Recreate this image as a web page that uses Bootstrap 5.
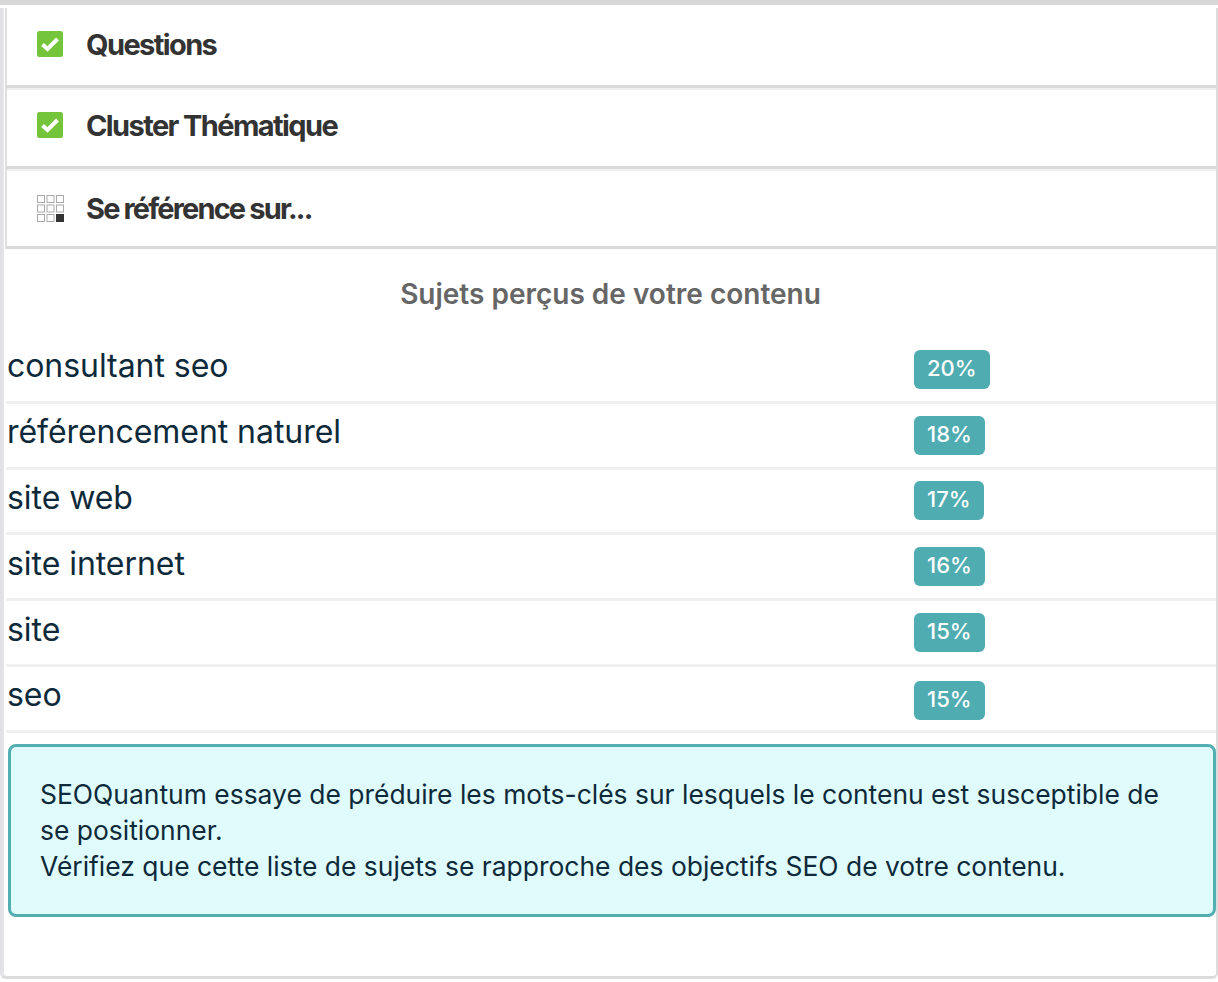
<!DOCTYPE html>
<html lang="fr">
<head>
    <meta charset="UTF-8">
    <meta name="viewport" content="width=device-width, initial-scale=1">
    <title>Sujets perçus</title>
    <link href="https://cdn.jsdelivr.net/npm/bootstrap@5.3.0/dist/css/bootstrap.min.css" rel="stylesheet">
    <style>
        html, body { height: 982px; overflow: hidden; }
        body { background: #fff; font-family: Inter, "Liberation Sans", sans-serif; color: #0e2a3a; }
        .frame { height: 971px; border-left: 2px solid #dfe1e4; border-right: 2px solid #dcdcdc; border-bottom: 3px solid #dcdcdc; border-radius: 0 0 6px 6px; background: #fff; padding-left: 4px; box-shadow: inset 2px 0 0 #e4e4e4; }
        .top-rule { height: 8px; background: #fff; border-top: 5px solid #d8d8d8; }
        .sect-row { height: 80px; gap: 23px; padding-left: 30px; padding-bottom: 4px; border-left: 2px solid #dedede; margin-left: -1px; border-bottom: 3px solid #dadada; font-weight: 700; font-size: 29px; letter-spacing: -1.6px; color: #333; }
        .sect-row + .sect-row { box-shadow: inset 0 2px 0 #f0f0f0; height: 81px; padding-bottom: 2px; }
        .sect-row + .sect-row + .sect-row { height: 80px; padding-bottom: 0; }
        .sect-row svg { flex: none; margin-bottom: 2px; }
        .sect-row .grid-icon { margin: 2px 0 0; }
        .sect-row .low-label { padding-top: 2px; margin-left: -1px; letter-spacing: -1.85px; }
        .topics-title { font-size: 28px; font-weight: 600; color: #666; text-align: center; margin: 29px 0 0; line-height: 32px; padding-right: 1px; }
        .topics { margin-top: 28px; }
        .topic-row { height: 65.8px; border-bottom: 3px solid #f0f0f0; font-size: 32px; color: #0e2a3a; padding-left: 1px; }
        .topic-name { width: 907px; flex: none; padding-bottom: 6px; letter-spacing: -.05px; }
        .pct { background: #4facb0; color: #fff; border-radius: 6px; font-size: 22px; font-weight: 500; line-height: 37px; height: 39px; padding: 0 13px; }
        .topic-row:last-child .pct { margin-top: 4px; }
        .note { margin: 11px 0 0 2px; height: 173px; border: 3px solid #53aeb1; border-radius: 8px; background: #dffbfc; padding: 29px 40px 30px 29px; font-size: 26.45px; line-height: 36px; color: #0e2a3a; }
    </style>
</head>
<body>
    <div class="top-rule"></div>
    <div class="frame">
        <div class="sect-row d-flex align-items-center">
            <svg width="26" height="26" viewBox="0 0 26 26"><rect width="26" height="26" rx="2.5" fill="#74c43c"/><path d="M5.5 13.5l5 4.5L20.5 8" fill="none" stroke="#fff" stroke-width="4"/></svg>
            <span>Questions</span>
        </div>
        <div class="sect-row d-flex align-items-center">
            <svg width="26" height="26" viewBox="0 0 26 26"><rect width="26" height="26" rx="2.5" fill="#74c43c"/><path d="M5.5 13.5l5 4.5L20.5 8" fill="none" stroke="#fff" stroke-width="4"/></svg>
            <span>Cluster Thématique</span>
        </div>
        <div class="sect-row d-flex align-items-center">
            <svg class="grid-icon" width="27" height="27" viewBox="0 0 27 27" fill="none" stroke="#aaa"><rect x=".5" y=".5" width="7" height="7"/><rect x="10" y=".5" width="7" height="7"/><rect x="19.5" y=".5" width="7" height="7"/><rect x=".5" y="10" width="7" height="7"/><rect x="10" y="10" width="7" height="7"/><rect x="19.5" y="10" width="7" height="7"/><rect x=".5" y="19.5" width="7" height="7"/><rect x="10" y="19.5" width="7" height="7"/><rect x="19.5" y="19.5" width="7" height="7" fill="#333" stroke="#333"/></svg>
            <span class="low-label">Se référence sur...</span>
        </div>
        <h2 class="topics-title">Sujets perçus de votre contenu</h2>
        <div class="topics">
            <div class="topic-row d-flex align-items-center"><span class="topic-name">consultant seo</span><span class="pct">20%</span></div>
            <div class="topic-row d-flex align-items-center"><span class="topic-name">référencement naturel</span><span class="pct">18%</span></div>
            <div class="topic-row d-flex align-items-center"><span class="topic-name">site web</span><span class="pct">17%</span></div>
            <div class="topic-row d-flex align-items-center"><span class="topic-name">site internet</span><span class="pct">16%</span></div>
            <div class="topic-row d-flex align-items-center"><span class="topic-name">site</span><span class="pct">15%</span></div>
            <div class="topic-row d-flex align-items-center"><span class="topic-name">seo</span><span class="pct">15%</span></div>
        </div>
        <div class="note">SEOQuantum essaye de préduire les mots-clés sur lesquels le contenu est susceptible de se positionner.<br>Vérifiez que cette liste de sujets se rapproche des objectifs SEO de votre contenu.</div>
    </div>
    <script src="https://cdn.jsdelivr.net/npm/bootstrap@5.3.0/dist/js/bootstrap.bundle.min.js"></script>
</body>
</html>
